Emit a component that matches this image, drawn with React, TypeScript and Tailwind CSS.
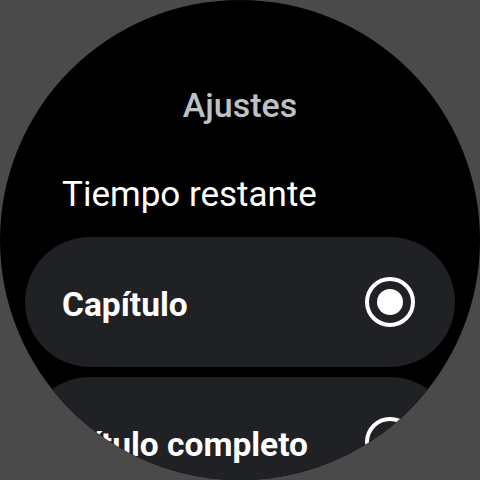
import { useState } from 'react';

const options = ['Tiempo restante', 'Capítulo', 'Capítulo completo'];

const Radio = ({ checked }: { checked: boolean }) => (
  <span className="w-[50px] h-[50px] shrink-0 rounded-full border-[4px] border-white flex items-center justify-center">
    {checked && <span className="w-[26px] h-[26px] rounded-full bg-white" />}
  </span>
);

const App = () => {
  const [selected, setSelected] = useState('Capítulo');

  return (
    <div className="w-[480px] h-[480px] bg-[#4a4a4a] overflow-hidden flex items-center justify-center font-['Roboto',sans-serif]">
      <div className="w-[480px] h-[480px] shrink-0 rounded-full bg-black overflow-hidden flex flex-col items-center pt-[85px]">
        <h1 className="text-[34px] leading-[40px] font-medium text-[#bdc1c6]">Ajustes</h1>

        <div className="w-[430px] mt-[50px] pl-[37px] text-[35px] leading-[40px] text-white">
          {options[0]}
        </div>

        <div className="mt-[22px] flex flex-col gap-[10px]">
          {options.slice(1).map((opt, i) => (
            <button
              key={opt}
              onClick={() => setSelected(opt)}
              className="w-[430px] h-[130px] shrink-0 rounded-full bg-[#202124] flex items-center justify-between pl-[37px] pr-[40px] text-left"
            >
              {/* el texto largo va desplazado (marquesina) */}
              <span
                className={
                  i === 1
                    ? 'text-[33.5px] leading-[40px] font-bold text-white pt-[6px] whitespace-nowrap -ml-[29px]'
                    : 'text-[33.5px] leading-[40px] font-bold text-white pt-[6px] whitespace-nowrap'
                }
              >
                {opt}
              </span>
              <Radio checked={selected === opt} />
            </button>
          ))}
        </div>
      </div>
    </div>
  );
};

export default App;
